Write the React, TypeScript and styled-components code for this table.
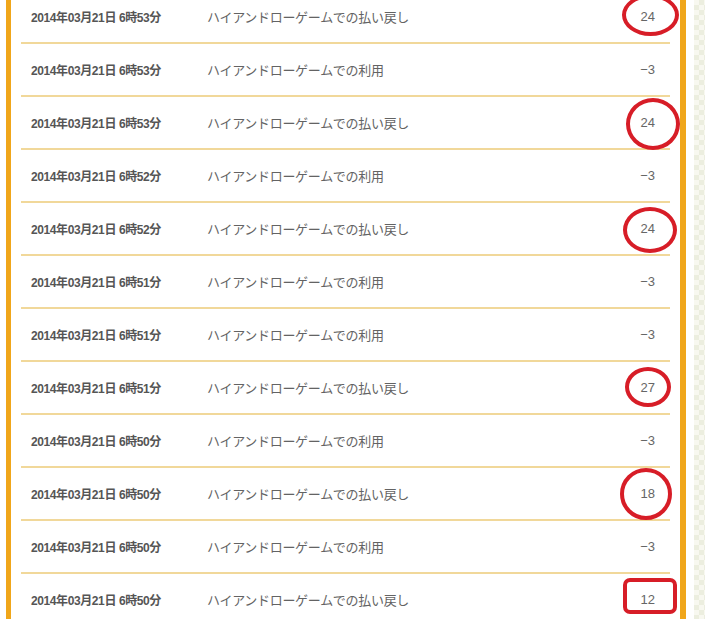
import styled, { createGlobalStyle } from "styled-components";

const GlobalStyle = createGlobalStyle`
  html, body {
    margin: 0;
    padding: 0;
    background: #fff;
    overflow: hidden;
  }
`;

const Page = styled.div`
  display: flex;
  height: 619px;
  overflow: hidden;
`;

const Panel = styled.div`
  box-sizing: border-box;
  width: 680px;
  margin-left: 6px;
  padding: 0 10px;
  border-left: 5px solid #f0a61a;
  border-right: 6px solid #f0a61a;
  background: #fff;
`;

const Pattern = styled.div`
  flex: 1;
  margin-left: 8px;
  background-color: #f8f8f0;
  background-image: conic-gradient(
    #eceedf 25%,
    transparent 0 50%,
    #eceedf 0 75%,
    transparent 0
  );
  background-size: 10px 10px;
`;

const List = styled.div`
  margin-top: -9px;
`;

const Row = styled.div`
  position: relative;
  display: grid;
  grid-template-columns: 176px 1fr auto;
  align-items: center;
  height: 51px;
  padding: 0 15px 0 10px;
  border-bottom: 2px solid #f1d89a;
`;

const DateCell = styled.div`
  font-family: "Liberation Sans", "Noto Sans CJK JP", sans-serif;
  font-size: 12px;
  font-weight: 700;
  letter-spacing: -0.4px;
  color: #555;
  white-space: nowrap;
  margin-top: -1px;
`;

const Description = styled.div`
  font-family: "Noto Sans CJK JP", sans-serif;
  font-size: 13px;
  letter-spacing: -0.3px;
  color: #636363;
  white-space: nowrap;
  margin-top: -1px;
`;

const Amount = styled.div`
  font-family: "Liberation Sans", sans-serif;
  font-size: 13px;
  color: #666;
  text-align: right;
  margin-top: -1px;
`;

const Mark = styled.span<{ $box?: boolean }>`
  position: absolute;
  box-sizing: border-box;
  border: 4px solid #d71d27;
  border-radius: ${(p) => (p.$box ? "7px" : "50%")};
  pointer-events: none;
`;

type Entry = {
  time: string;
  kind: "refund" | "use";
  amount: string;
  mark?: { left: number; top: number; w: number; h: number; box?: boolean };
};

const entries: Entry[] = [
  { time: "6時53分", kind: "refund", amount: "24", mark: { left: 601, top: 3, w: 57, h: 42 } },
  { time: "6時53分", kind: "use", amount: "−3" },
  { time: "6時53分", kind: "refund", amount: "24", mark: { left: 605, top: 1, w: 54, h: 52 } },
  { time: "6時52分", kind: "use", amount: "−3" },
  { time: "6時52分", kind: "refund", amount: "24", mark: { left: 602, top: 4, w: 54, h: 46 } },
  { time: "6時51分", kind: "use", amount: "−3" },
  { time: "6時51分", kind: "use", amount: "−3" },
  { time: "6時51分", kind: "refund", amount: "27", mark: { left: 604, top: 5, w: 46, h: 40 } },
  { time: "6時50分", kind: "use", amount: "−3" },
  { time: "6時50分", kind: "refund", amount: "18", mark: { left: 599, top: 0, w: 52, h: 52 } },
  { time: "6時50分", kind: "use", amount: "−3" },
  { time: "6時50分", kind: "refund", amount: "12", mark: { left: 602, top: 4, w: 54, h: 36, box: true } },
];

const labels = {
  refund: "ハイアンドローゲームでの払い戻し",
  use: "ハイアンドローゲームでの利用",
};

export default function App() {
  return (
    <Page>
      <GlobalStyle />
      <Panel>
        <List>
          {entries.map((e, i) => (
            <Row key={i}>
              <DateCell>2014年03月21日 {e.time}</DateCell>
              <Description>{labels[e.kind]}</Description>
              <Amount>{e.amount}</Amount>
              {e.mark && (
                <Mark
                  $box={e.mark.box}
                  style={{
                    left: e.mark.left,
                    top: e.mark.top,
                    width: e.mark.w,
                    height: e.mark.h,
                  }}
                />
              )}
            </Row>
          ))}
        </List>
      </Panel>
      <Pattern />
    </Page>
  );
}
